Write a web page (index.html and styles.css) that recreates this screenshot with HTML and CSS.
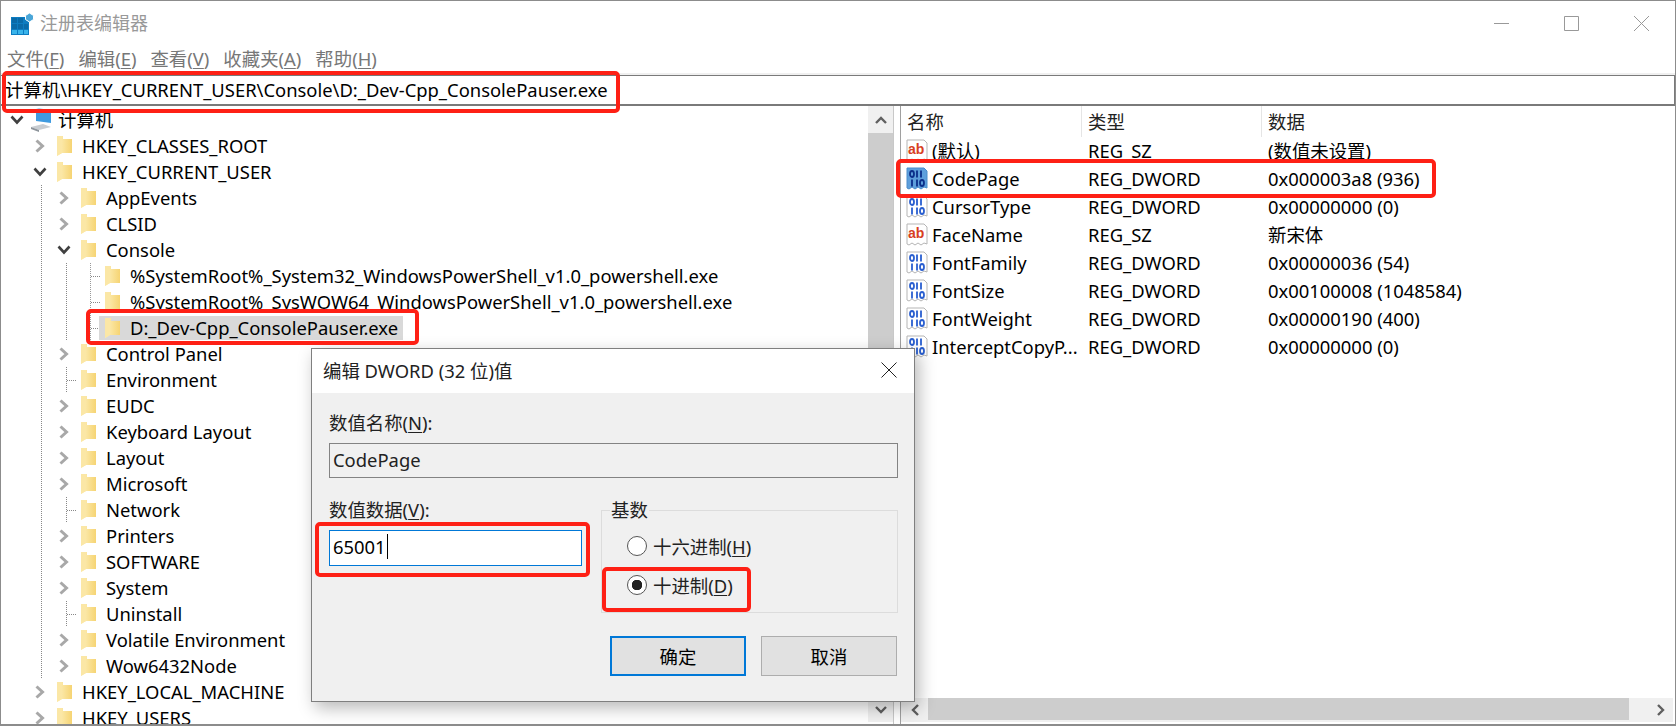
FILE: index.html
```html
<!DOCTYPE html>
<html lang="zh-CN">
<head>
    <meta charset="UTF-8">
    <title>注册表编辑器</title>
    <link rel="stylesheet" href="styles.css">
</head>
<body>
    <svg class="defs" width="0" height="0">
        <defs>
            <linearGradient id="fold" x1="0" x2="1" y1="0" y2="0">
                <stop offset="0" stop-color="#fdf0bd"/>
                <stop offset="1" stop-color="#f6d473"/>
            </linearGradient>
            <symbol id="folder" viewBox="0 0 15 20">
                <path d="M0 0h6v3h9v14H5l-5 3z" fill="url(#fold)"/>
                <path d="M0 0h5v17l-5 3z" fill="#fbe7a6"/>
            </symbol>
            <symbol id="right" viewBox="0 0 10 14">
                <path d="M1.5 1.5 7.5 7l-6 5.5" fill="none" stroke="#a8a8a8" stroke-width="3"/>
            </symbol>
            <symbol id="down" viewBox="0 0 14 10">
                <path d="M1.5 1.5 7 7.5l5.5-6" fill="none" stroke="#404040" stroke-width="2.6"/>
            </symbol>
            <symbol id="sz" viewBox="0 0 22 24">
                <path d="M1 1h17l3 3v17l-3-1-3 2-3-2-3 2-3-2-3 2-2-1z" fill="#fff" stroke="#b5b5b5"/>
                <text x="2" y="15" class="ab">ab</text>
            </symbol>
            <symbol id="bin" viewBox="0 0 22 24">
                <path d="M1 1h17l3 3v17l-3-1-3 2-3-2-3 2-3-2-3 2-2-1z" fill="#fff" stroke="#b5b5b5"/>
                <g fill="none" stroke="#2a5fd0" stroke-width="1.8">
                    <ellipse cx="6" cy="7" rx="2" ry="3"/>
                    <path d="M11 3.5v7M15 3.5v7M6 12.5v7M11 12.5v7"/>
                    <ellipse cx="16" cy="16" rx="2" ry="3"/>
                </g>
            </symbol>
            <symbol id="bin-on" viewBox="0 0 22 24">
                <path d="M1 1h17l3 3v17l-3-1-3 2-3-2-3 2-3-2-3 2-2-1z" fill="#5d9fdc" stroke="#4a8ccb"/>
                <g fill="none" stroke="#0b2f8a" stroke-width="1.8">
                    <ellipse cx="6" cy="7" rx="2" ry="3"/>
                    <path d="M11 3.5v7M15 3.5v7M6 12.5v7M11 12.5v7"/>
                    <ellipse cx="16" cy="16" rx="2" ry="3"/>
                </g>
            </symbol>
            <symbol id="chev-up" viewBox="0 0 12 8">
                <path d="M1 7 6 2l5 5" fill="none" stroke="#606060" stroke-width="2.4"/>
            </symbol>
            <symbol id="chev-down" viewBox="0 0 12 8">
                <path d="M1 1l5 5 5-5" fill="none" stroke="#606060" stroke-width="2.4"/>
            </symbol>
            <symbol id="chev-left" viewBox="0 0 8 12">
                <path d="M7 1 2 6l5 5" fill="none" stroke="#606060" stroke-width="2.4"/>
            </symbol>
            <symbol id="chev-right" viewBox="0 0 8 12">
                <path d="M1 1l5 5-5 5" fill="none" stroke="#606060" stroke-width="2.4"/>
            </symbol>
        </defs>
    </svg>

    <div class="window">
        <div class="titlebar">
            <svg class="app-icon" width="24" height="24" viewBox="0 0 24 24">
                <path d="M1 5h18v18H1z" fill="#0d7cc1"/>
                <path d="M2 6h5v5H2zM8 6h5v5H8zM2 12h5v5H2zM8 12h5v5H8zM14 12h4v5h-4z" fill="#0a6aa8"/>
                <path d="M2 18h5v4H2zM8 18h5v4H8zM14 18h4v4h-4z" fill="#39b4ea"/>
                <path d="M19.500 1l4 2.500v4l-4 2.500-4-2.500v-4z" fill="#4aa6d8" stroke="#fff"/>
            </svg>
            <span class="title">注册表编辑器</span>
            <div class="win-btns">
                <svg width="15" height="15" viewBox="0 0 15 15"><path d="M0 7.500h15" stroke="#999"/></svg>
                <svg width="15" height="15" viewBox="0 0 15 15"><path d="M.5.500h14v14H.5z" fill="none" stroke="#999"/></svg>
                <svg width="15" height="15" viewBox="0 0 15 15"><path d="M0 0l15 15M15 0 0 15" stroke="#999"/></svg>
            </div>
        </div>
        <div class="menubar">
            <span>文件(<u>F</u>)</span>
            <span>编辑(<u>E</u>)</span>
            <span>查看(<u>V</u>)</span>
            <span>收藏夹(<u>A</u>)</span>
            <span>帮助(<u>H</u>)</span>
        </div>
        <div class="address">计算机\HKEY_CURRENT_USER\Console\D:_Dev-Cpp_ConsolePauser.exe</div>

        <div class="panes">
            <div class="tree">
                <div class="row root">
                    <span class="twist"><svg width="14" height="10"><use href="#down"/></svg></span>
                    <svg class="pc" width="24" height="26" viewBox="0 0 24 26">
                        <path d="M7 2l15 3v11L7 14z" fill="#3f9be0"/>
                        <path d="M7 2l3-1 13 3-1 1z" fill="#a5d4f5"/>
                        <path d="M2 20l12-3 8 3-12 3z" fill="#c8cdd2"/>
                        <path d="M2 20l8 3v2l-8-3z" fill="#8d949b"/>
                    </svg>
                    <span class="node">计算机</span>
                </div>
                <div class="row lv1"><span class="twist"><svg width="10" height="14"><use href="#right"/></svg></span><span class="node"><svg class="folder"><use href="#folder"/></svg>HKEY_CLASSES_ROOT</span></div>
                <div class="row lv1"><span class="twist"><svg width="14" height="10"><use href="#down"/></svg></span><span class="node"><svg class="folder"><use href="#folder"/></svg>HKEY_CURRENT_USER</span></div>
                <div class="row lv2"><span class="twist"><svg width="10" height="14"><use href="#right"/></svg></span><span class="node"><svg class="folder"><use href="#folder"/></svg>AppEvents</span></div>
                <div class="row lv2"><span class="twist"><svg width="10" height="14"><use href="#right"/></svg></span><span class="node"><svg class="folder"><use href="#folder"/></svg>CLSID</span></div>
                <div class="row lv2"><span class="twist"><svg width="14" height="10"><use href="#down"/></svg></span><span class="node"><svg class="folder"><use href="#folder"/></svg>Console</span></div>
                <div class="row lv3"><span class="twist"></span><span class="node"><svg class="folder"><use href="#folder"/></svg>%SystemRoot%_System32_WindowsPowerShell_v1.0_powershell.exe</span></div>
                <div class="row lv3"><span class="twist"></span><span class="node"><svg class="folder"><use href="#folder"/></svg>%SystemRoot%_SysWOW64_WindowsPowerShell_v1.0_powershell.exe</span></div>
                <div class="row lv3 last"><span class="twist"></span><span class="node selected"><svg class="folder"><use href="#folder"/></svg>D:_Dev-Cpp_ConsolePauser.exe</span></div>
                <div class="row lv2"><span class="twist"><svg width="10" height="14"><use href="#right"/></svg></span><span class="node"><svg class="folder"><use href="#folder"/></svg>Control Panel</span></div>
                <div class="row lv2 leaf"><span class="twist"></span><span class="node"><svg class="folder"><use href="#folder"/></svg>Environment</span></div>
                <div class="row lv2"><span class="twist"><svg width="10" height="14"><use href="#right"/></svg></span><span class="node"><svg class="folder"><use href="#folder"/></svg>EUDC</span></div>
                <div class="row lv2"><span class="twist"><svg width="10" height="14"><use href="#right"/></svg></span><span class="node"><svg class="folder"><use href="#folder"/></svg>Keyboard Layout</span></div>
                <div class="row lv2"><span class="twist"><svg width="10" height="14"><use href="#right"/></svg></span><span class="node"><svg class="folder"><use href="#folder"/></svg>Layout</span></div>
                <div class="row lv2"><span class="twist"><svg width="10" height="14"><use href="#right"/></svg></span><span class="node"><svg class="folder"><use href="#folder"/></svg>Microsoft</span></div>
                <div class="row lv2 leaf"><span class="twist"></span><span class="node"><svg class="folder"><use href="#folder"/></svg>Network</span></div>
                <div class="row lv2"><span class="twist"><svg width="10" height="14"><use href="#right"/></svg></span><span class="node"><svg class="folder"><use href="#folder"/></svg>Printers</span></div>
                <div class="row lv2"><span class="twist"><svg width="10" height="14"><use href="#right"/></svg></span><span class="node"><svg class="folder"><use href="#folder"/></svg>SOFTWARE</span></div>
                <div class="row lv2"><span class="twist"><svg width="10" height="14"><use href="#right"/></svg></span><span class="node"><svg class="folder"><use href="#folder"/></svg>System</span></div>
                <div class="row lv2 leaf"><span class="twist"></span><span class="node"><svg class="folder"><use href="#folder"/></svg>Uninstall</span></div>
                <div class="row lv2"><span class="twist"><svg width="10" height="14"><use href="#right"/></svg></span><span class="node"><svg class="folder"><use href="#folder"/></svg>Volatile Environment</span></div>
                <div class="row lv2"><span class="twist"><svg width="10" height="14"><use href="#right"/></svg></span><span class="node"><svg class="folder"><use href="#folder"/></svg>Wow6432Node</span></div>
                <div class="row lv1"><span class="twist"><svg width="10" height="14"><use href="#right"/></svg></span><span class="node"><svg class="folder"><use href="#folder"/></svg>HKEY_LOCAL_MACHINE</span></div>
                <div class="row lv1"><span class="twist"><svg width="10" height="14"><use href="#right"/></svg></span><span class="node"><svg class="folder"><use href="#folder"/></svg>HKEY_USERS</span></div>
            </div>

            <div class="vscroll">
                <div class="sb-btn top"><svg width="12" height="8"><use href="#chev-up"/></svg></div>
                <div class="sb-thumb"></div>
                <div class="sb-btn"><svg width="12" height="8"><use href="#chev-down"/></svg></div>
            </div>
            <div class="splitter"></div>

            <div class="list">
                <div class="list-head">
                    <div>名称</div>
                    <div>类型</div>
                    <div>数据</div>
                </div>
                <div class="list-body">
                    <div class="item"><span class="item-name"><svg class="reg"><use href="#sz"/></svg>(默认)</span><span>REG_SZ</span><span>(数值未设置)</span></div>
                    <div class="item"><span class="item-name"><svg class="reg"><use href="#bin-on"/></svg>CodePage</span><span>REG_DWORD</span><span>0x000003a8 (936)</span></div>
                    <div class="item"><span class="item-name"><svg class="reg"><use href="#bin"/></svg>CursorType</span><span>REG_DWORD</span><span>0x00000000 (0)</span></div>
                    <div class="item"><span class="item-name"><svg class="reg"><use href="#sz"/></svg>FaceName</span><span>REG_SZ</span><span>新宋体</span></div>
                    <div class="item"><span class="item-name"><svg class="reg"><use href="#bin"/></svg>FontFamily</span><span>REG_DWORD</span><span>0x00000036 (54)</span></div>
                    <div class="item"><span class="item-name"><svg class="reg"><use href="#bin"/></svg>FontSize</span><span>REG_DWORD</span><span>0x00100008 (1048584)</span></div>
                    <div class="item"><span class="item-name"><svg class="reg"><use href="#bin"/></svg>FontWeight</span><span>REG_DWORD</span><span>0x00000190 (400)</span></div>
                    <div class="item"><span class="item-name"><svg class="reg"><use href="#bin"/></svg>InterceptCopyP...</span><span>REG_DWORD</span><span>0x00000000 (0)</span></div>
                </div>
                <div class="hscroll">
                    <div class="sb-btn side"><svg width="8" height="12"><use href="#chev-left"/></svg></div>
                    <div class="sb-thumb"></div>
                    <div class="sb-btn side"><svg width="8" height="12"><use href="#chev-right"/></svg></div>
                </div>
            </div>
        </div>

        <div class="dialog">
            <div class="dlg-title">
                <span>编辑 DWORD (32 位)值</span>
                <svg width="16" height="16" viewBox="0 0 16 16"><path d="M.5.500l15 15M15.500.500l-15 15" stroke="#222"/></svg>
            </div>
            <div class="dlg-body">
                <div class="dlg-label">数值名称(<u>N</u>):</div>
                <div class="field readonly">CodePage</div>
                <div class="dlg-cols">
                    <div>
                        <div class="dlg-label">数值数据(<u>V</u>):</div>
                        <div class="field focused"><span class="caret">65001</span></div>
                    </div>
                    <fieldset class="base">
                        <legend>基数</legend>
                        <div class="radio"><span class="dot"></span>十六进制(<u>H</u>)</div>
                        <div class="radio on"><span class="dot"></span>十进制(<u>D</u>)</div>
                    </fieldset>
                </div>
                <div class="dlg-btns">
                    <div class="btn default">确定</div>
                    <div class="btn">取消</div>
                </div>
            </div>
        </div>

        <div class="mark mark-address"></div>
        <div class="mark mark-key"></div>
        <div class="mark mark-value"></div>
        <div class="mark mark-data"></div>
        <div class="mark mark-radix"></div>
    </div>
</body>
</html>
```
FILE: styles.css
```css
* {
    box-sizing: border-box;
}
body {
    margin: 0;
    background: #fff;
    font-family: "Noto Sans", "Noto Sans CJK SC", sans-serif;
    font-size: 18.4px;
    color: #000;
    overflow: hidden;
}
.defs {
    display: block;
    height: 0;
}
.ab {
    font-family: "Liberation Sans", sans-serif;
    font-size: 14px;
    font-weight: bold;
    fill: #d8401f;
}
u {
    text-underline-offset: 2px;
}
.window {
    position: relative;
    width: 1676px;
    height: 726px;
    display: flex;
    flex-direction: column;
    border: 1px solid #8c8c8c;
    border-bottom: 2px solid #8c8c8c;
    overflow: hidden;
}
.titlebar {
    height: 45px;
    flex: none;
    display: flex;
    align-items: center;
    padding-left: 9px;
}
.app-icon {
    margin-right: 6px;
}
.title {
    font-size: 18px;
    color: #999;
    margin-top: -3px;
}
.win-btns {
    margin-left: auto;
    display: flex;
    gap: 55px;
    padding-right: 26px;
    margin-top: -1px;
}
.menubar {
    height: 27px;
    flex: none;
    display: flex;
    gap: 14px;
    padding-left: 6px;
    padding-bottom: 4px;
    align-items: center;
    color: #777;
}
.address {
    height: 31px;
    flex: none;
    margin-top: 2px;
    padding-left: 4px;
    line-height: 27px;
    border-top: 1px solid #7a7a7a;
    border-bottom: 2px solid #7a7a7a;
    border-right: 1px solid #7a7a7a;
    box-shadow: 0 -2px 0 #f0f0f0;
    white-space: nowrap;
}
.panes {
    flex: 1;
    min-height: 0;
    display: flex;
}
.tree {
    width: 867px;
    flex: none;
    padding-top: 1px;
    overflow: hidden;
}
.row {
    height: 26px;
    display: flex;
    align-items: center;
    white-space: nowrap;
    background-repeat: no-repeat;
}
.twist {
    width: 16px;
    flex: none;
    display: flex;
    justify-content: center;
    margin-right: 3px;
}
.node {
    display: inline-flex;
    align-items: center;
    height: 24px;
    padding: 0 5px 2px 6px;
}
.node.selected {
    background: #d9d9d9;
}
.folder {
    width: 15px;
    height: 20px;
    margin-top: 2px;
    margin-right: 10px;
    flex: none;
}
.root {
    padding-left: 8px;
}
.root .twist {
    margin-right: 4px;
}
.root .node {
    padding-left: 5px;
}
.pc {
    margin-right: 0;
}
.lv1 {
    padding-left: 31px;
}
.lv2 {
    padding-left: 55px;
    background-image: repeating-linear-gradient(to bottom, #888 0 1px, transparent 1px 2px);
    background-size: 1px 100%;
    background-position: 40px 0;
}
.lv2.leaf {
    background-image: repeating-linear-gradient(to bottom, #888 0 1px, transparent 1px 2px),
        repeating-linear-gradient(to bottom, #888 0 1px, transparent 1px 2px),
        repeating-linear-gradient(to right, #888 0 1px, transparent 1px 2px);
    background-size: 1px 100%, 1px 100%, 10px 1px;
    background-position: 40px 0, 65px 0, 66px 13px;
}
.lv3 {
    padding-left: 79px;
    background-image: repeating-linear-gradient(to bottom, #888 0 1px, transparent 1px 2px),
        repeating-linear-gradient(to bottom, #888 0 1px, transparent 1px 2px),
        repeating-linear-gradient(to bottom, #999 0 1px, transparent 1px 2px),
        repeating-linear-gradient(to right, #888 0 1px, transparent 1px 2px);
    background-size: 1px 100%, 1px 100%, 1px 100%, 10px 1px;
    background-position: 40px 0, 65px 0, 89px 0, 90px 13px;
}
.vscroll {
    width: 25px;
    flex: none;
    margin-bottom: 2px;
    display: flex;
    flex-direction: column;
    background: #f0f0f0;
}
.sb-btn {
    height: 24px;
    flex: none;
    display: flex;
    align-items: center;
    justify-content: center;
    background: #f0f0f0;
}
.sb-btn.top {
    height: 27px;
}
.sb-thumb {
    flex: 1;
    background: #cdcdcd;
}
.vscroll .sb-thumb {
    margin-bottom: 3px;
}
.splitter {
    width: 8px;
    flex: none;
    background: #fff;
    border-left: 1px solid #c8c8c8;
    border-right: 1px solid #a0a0a0;
}
.list {
    flex: 1;
    display: flex;
    flex-direction: column;
    padding: 0 2px 2px 0;
}
.list-head {
    height: 31px;
    flex: none;
    display: grid;
    grid-template-columns: 181px 180px 1fr;
    align-items: center;
    color: #222;
}
.list-head div {
    height: 100%;
    line-height: 31px;
    padding-left: 6px;
    border-right: 1px solid #e5e5e5;
}
.list-head div:last-child {
    border-right: 0;
}
.list-body {
    flex: 1;
}
.item {
    height: 28px;
    display: grid;
    grid-template-columns: 182px 180px 1fr;
    align-items: center;
    padding: 0 0 2px 5px;
    white-space: nowrap;
}
.item-name {
    display: flex;
    align-items: center;
    height: 24px;
}
.reg {
    width: 22px;
    height: 24px;
    margin-top: 2px;
    margin-right: 4px;
    flex: none;
}
.hscroll {
    height: 24px;
    flex: none;
    display: flex;
    background: #f0f0f0;
}
.sb-btn.side {
    height: auto;
    width: 27px;
}
.hscroll .sb-btn.side:last-child {
    width: 44px;
    justify-content: flex-end;
    padding-right: 8px;
}
.hscroll .sb-thumb {
    margin-bottom: 2px;
}

/* dialog sits over the window */
.dialog {
    position: absolute;
    left: 310px;
    top: 347px;
    width: 604px;
    height: 354px;
    border: 1px solid #7f7f7f;
    background: #f0f0f0;
    box-shadow: 4px 6px 16px rgba(0,0,0,0.28);
    display: flex;
    flex-direction: column;
}
.dlg-title {
    height: 44px;
    flex: none;
    background: #fff;
    display: flex;
    align-items: center;
    justify-content: space-between;
    padding: 0 17px 3px 11px;
    color: #222;
}
.dlg-body {
    padding: 18px 16px 0 17px;
}
.dlg-label {
    height: 24px;
    line-height: 24px;
    margin-bottom: 8px;
    color: #222;
}
.field {
    padding-left: 3px;
    padding-bottom: 3px;
    display: flex;
    align-items: center;
    border: 1px solid #838383;
    height: 35px;
}
.field.readonly {
    background: #f0f0f0;
    color: #222;
}
.field.focused {
    height: 36px;
    background: #fff;
    border-color: #0078d7;
}
.caret {
    border-right: 1px solid #000;
    height: 25px;
    line-height: 25px;
    padding-right: 1px;
}
.dlg-cols {
    margin-top: 20px;
    display: grid;
    grid-template-columns: 253px 297px;
    column-gap: 19px;
}
.base {
    margin: 0;
    padding: 11px 0 0 25px;
    height: 115px;
    min-inline-size: 0;
    border: 1px solid #dcdcdc;
}
.base legend {
    margin-left: -17px;
    padding: 0 1px;
    height: 24px;
    line-height: 24px;
    color: #222;
}
.radio {
    height: 26px;
    display: flex;
    align-items: center;
    margin-bottom: 13px;
    color: #222;
}
.dot {
    width: 20px;
    height: 20px;
    border: 1px solid #555;
    border-radius: 50%;
    background: #fff;
    margin-right: 6px;
    display: flex;
    align-items: center;
    justify-content: center;
}
.radio.on .dot {
    background: radial-gradient(circle, #222 0 5px, #fff 5.5px);
}
.dlg-btns {
    margin-top: 23px;
    display: flex;
    gap: 15px;
    padding-left: 281px;
}
.btn {
    width: 136px;
    height: 40px;
    line-height: 40px;
    text-align: center;
    background: #e1e1e1;
    border: 1px solid #adadad;
}
.btn.default {
    border: 2px solid #0078d7;
    line-height: 38px;
}

/* red annotation boxes */
.mark {
    position: absolute;
    border: 4px solid #fe2015;
    border-radius: 5px;
}
.mark-address {
    left: 1px;
    top: 70px;
    width: 618px;
    height: 42px;
}
.mark-key {
    left: 85px;
    top: 308px;
    width: 333px;
    height: 36px;
}
.mark-value {
    left: 895px;
    top: 158px;
    width: 540px;
    height: 39px;
}
.mark-data {
    left: 314px;
    top: 521px;
    width: 275px;
    height: 55px;
}
.mark-radix {
    left: 601px;
    top: 566px;
    width: 149px;
    height: 45px;
}
```
